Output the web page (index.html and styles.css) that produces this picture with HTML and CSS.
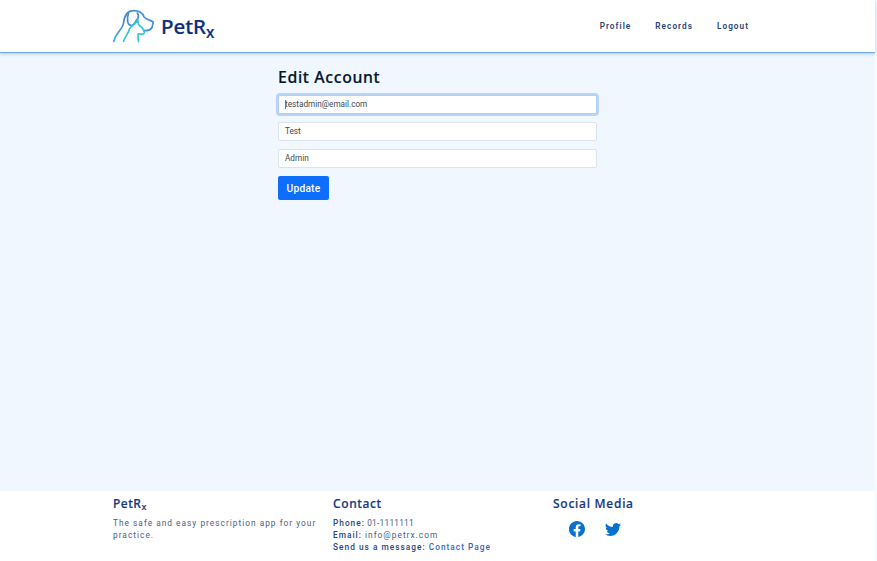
FILE: index.html
```
<!DOCTYPE html>
<html lang="en">
<head>
<meta charset="utf-8">
<title>PetRx</title>
<link rel="stylesheet" href="styles.css">
</head>
<body>
<div class="page">
  <header class="header">
    <a class="brand">
      <svg class="logo" viewBox="0 0 42 34" fill="none" stroke-width="1.7" stroke-linecap="round" stroke-linejoin="round">
        <defs>
          <linearGradient id="coat" x1="0" y1="1" x2="1" y2="0"><stop offset="0" stop-color="#3fa9df"/><stop offset=".5" stop-color="#4189cf"/><stop offset="1" stop-color="#4a98d8"/></linearGradient>
        </defs>
        <path stroke="url(#coat)" d="M.8 32.300C3 23 9.500 21 10.500 14C11.500 6 14.500 1.700 20.500 1.700C25.500 1.700 29.500 3 31 8C33.500 10.500 37 11 40.300 13L39 18.500C37.500 21 34 22 31 21.500"/>
        <path stroke="#438bd1" d="M15.500 4.500C13.800 9 13.800 16.500 18.500 16.500C22.500 16.500 21.500 12 24.800 9.500C25.800 7 25.200 5 24.200 4"/>
        <path stroke="#30c5d2" d="M10.500 32.300C12 27 15.500 24.500 16.500 20C18 16.500 22 16 24.800 10.500C25 14 24.500 15.500 27 17C30 18.500 30 20 31 22C32.500 24.500 30 26 25.500 24.800C24 27 25.500 29 25.500 32.300"/>
      </svg>
      <span class="wordmark">PetR<sub>x</sub></span>
    </a>
    <nav class="nav"><a>Profile</a><a>Records</a><a>Logout</a></nav>
  </header>
  <main class="main">
    <form class="form">
      <h1>Edit Account</h1>
      <div class="field focused"><span class="caret"></span>testadmin@email.com</div>
      <div class="field">Test</div>
      <div class="field">Admin</div>
      <button type="button">Update</button>
    </form>
  </main>
  <footer class="footer">
    <section><h2 class="name">PetR<sub>x</sub></h2><p class="about">The safe and easy prescription app for your<br>practice.</p></section>
    <section><h2 class="contact">Contact</h2>
      <p class="phone"><b>Phone:</b> 01-1111111</p>
      <p class="email"><b>Email:</b> info@petrx.com</p>
      <p class="message"><b>Send us a message:</b> <a>Contact Page</a></p>
    </section>
    <section><h2>Social Media</h2>
      <div class="social">
        <svg viewBox="0 0 16 16"><path d="M16 8.049c0-4.446-3.582-8.050-8-8.050C3.580 0-.002 3.603-.002 8.050c0 4.017 2.926 7.347 6.750 7.951v-5.625h-2.030V8.050H6.750V6.275c0-2.017 1.195-3.131 3.022-3.131.876 0 1.791.157 1.791.157v1.980h-1.009c-.993 0-1.303.621-1.303 1.258v1.510h2.218l-.354 2.326H9.250V16c3.824-.604 6.750-3.934 6.750-7.951z"/></svg>
        <svg viewBox="0 0 16 16"><path d="M5.026 15c6.038 0 9.341-5.003 9.341-9.334 0-.140 0-.282-.006-.422A6.685 6.685 0 0 0 16 3.542a6.658 6.658 0 0 1-1.889.518 3.301 3.301 0 0 0 1.447-1.817 6.533 6.533 0 0 1-2.087.793A3.286 3.286 0 0 0 7.875 6.030a9.325 9.325 0 0 1-6.767-3.429 3.289 3.289 0 0 0 1.018 4.382A3.323 3.323 0 0 1 .640 6.575v.045a3.288 3.288 0 0 0 2.632 3.218 3.203 3.203 0 0 1-.865.115 3.230 3.230 0 0 1-.614-.057 3.283 3.283 0 0 0 3.067 2.277A6.588 6.588 0 0 1 .780 13.580a6.320 6.320 0 0 1-.780-.045A9.344 9.344 0 0 0 5.026 15z"/></svg>
      </div>
    </section>
  </footer>
</div>
</body>
</html>
```
FILE: styles.css
```
* { box-sizing: border-box; }
body { margin: 0; background: #f8fbfe; font-family: Roboto, "Liberation Sans", sans-serif; }
h1, h2, p { margin: 0; }
sub { line-height: 0; vertical-align: baseline; position: relative; top: .25em; font-size: .75em; }
.page { width: 875px; height: 561px; display: flex; flex-direction: column; }
.header { height: 53px; flex: none; background: #fff; border-bottom: 1px solid #74a9dc; box-shadow: 0 1px 3px #a5c8ea; padding: 0 126px 0 113px; display: flex; justify-content: space-between; align-items: center; z-index: 1; }
.brand { display: flex; align-items: center; gap: 6px; }
.logo { width: 42px; height: 34px; }
.wordmark { font: 500 20.500px/30px "Noto Sans", sans-serif; color: #0a2f7c; letter-spacing: 0; -webkit-text-stroke: .2px #0a2f7c; }
.nav { display: flex; gap: 24px; font-size: 8.200px; font-weight: 600; letter-spacing: 1.060px; color: #2a416f; }
.main { flex: 1; background: #f1f7fe; display: flex; justify-content: center; align-items: flex-start; padding-top: 13px; }
.form { width: 319px; display: flex; flex-direction: column; align-items: flex-start; }
h1 { font: 500 15.800px/23px "Noto Sans", sans-serif; letter-spacing: .66px; color: #05152b; -webkit-text-stroke: .2px #05152b; margin-bottom: 6px; }
.field { width: 319px; height: 19px; margin-bottom: 8px; border: 1px solid #dce3ea; border-radius: 2px; background: #fff; padding: 0 6px; font-size: 8.200px; line-height: 17px; letter-spacing: 0; color: #40484f; }
.focused { border-color: #b0d0f8; box-shadow: 0 0 0 2px #b8d5f8; position: relative; }
.caret { position: absolute; left: 6px; top: 4px; width: 1px; height: 9px; background: #778; }
button { width: 51px; height: 24px; padding: 0; border: 0; border-radius: 2px; background: #0d6efd; color: #fff; font: 500 10.200px Roboto, sans-serif; letter-spacing: .25px; }
.footer { height: 70px; flex: none; background: #fff; padding: 4px 0 0 113px; display: grid; grid-template-columns: 220px 220px 220px; color: #4b6083; font-size: 8.300px; line-height: 12px; letter-spacing: 1.020px; }
h2 { font: 500 12px/17px "Noto Sans", sans-serif; letter-spacing: .75px; color: #17387f; -webkit-text-stroke: .2px #17387f; margin-bottom: 5px; }
.name { letter-spacing: .5px; }
.contact { letter-spacing: .6px; }
.phone { letter-spacing: .25px; }
.phone b { letter-spacing: 1px; }
b { color: #2a4777; font-weight: 500; }
.footer a { color: #2d68b8; font-weight: 500; }
.social { display: flex; gap: 20px; padding: 4px 0 0 16px; }
.social svg { width: 16px; height: 16px; fill: #0870ce; }
```
